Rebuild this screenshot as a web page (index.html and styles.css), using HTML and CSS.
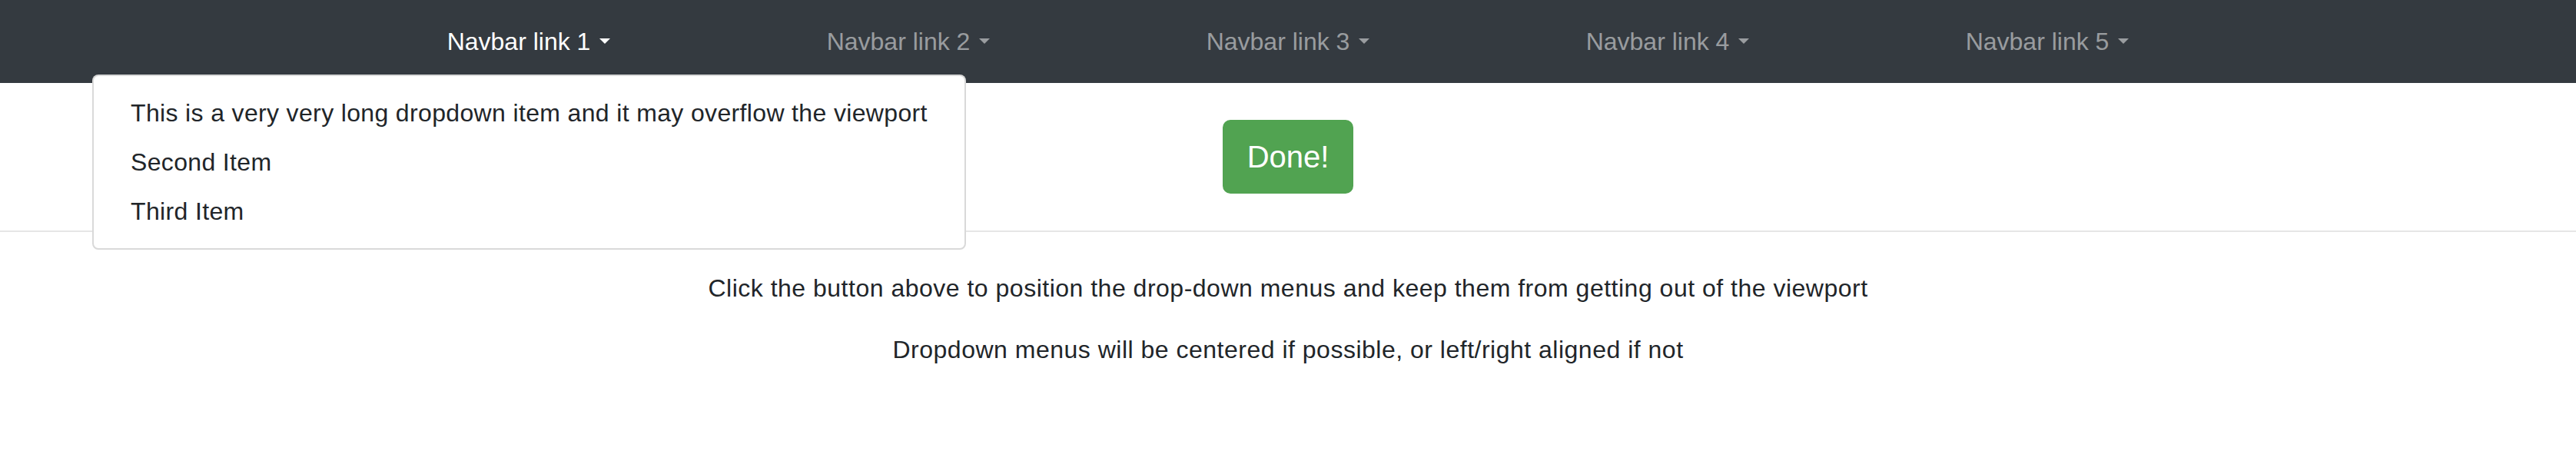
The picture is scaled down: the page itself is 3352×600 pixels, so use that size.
FILE: index.html
```html
<!doctype html>
<html lang="en">
    <head>
        <meta charset="UTF-8" />
        <meta name="viewport" content="width=device-width, initial-scale=1.0" />
        <title>Dropdown positioning</title>
        <link rel="stylesheet" href="styles.css">
    </head>
    <body>
        <nav class="navbar">
            <ul class="nav-list">
                <li class="nav-item">
                    <a class="nav-link active" href="#">Navbar link 1<span class="caret"></span></a>
                    <div class="dropdown-menu">
                        <a class="dropdown-item" href="#">This is a very very long dropdown item and it may overflow the viewport</a>
                        <a class="dropdown-item" href="#">Second Item</a>
                        <a class="dropdown-item" href="#">Third Item</a>
                    </div>
                </li>
                <li class="nav-item">
                    <a class="nav-link" href="#">Navbar link 2<span class="caret"></span></a>
                </li>
                <li class="nav-item">
                    <a class="nav-link" href="#">Navbar link 3<span class="caret"></span></a>
                </li>
                <li class="nav-item">
                    <a class="nav-link" href="#">Navbar link 4<span class="caret"></span></a>
                </li>
                <li class="nav-item">
                    <a class="nav-link" href="#">Navbar link 5<span class="caret"></span></a>
                </li>
            </ul>
        </nav>

        <div class="actions">
            <button type="button" class="btn-done">Done!</button>
        </div>

        <hr class="divider" />

        <div class="notes">
            <p>Click the button above to position the drop-down menus and keep them from getting out of the viewport</p>
            <p>Dropdown menus will be centered if possible, or left/right aligned if not</p>
        </div>
    </body>
</html>
```
FILE: styles.css
```css
body {
    margin: 0;
    font-family: "Liberation Sans", Arial, sans-serif;
    font-size: 32px;
    line-height: 48px;
    letter-spacing: 0.5px;
    color: #212529;
    background-color: #fff;
}
.navbar {
    position: relative;
    background-color: #343a40;
    padding: 14px 0;
}
.nav-list {
    display: flex;
    justify-content: center;
    list-style: none;
    margin: 0;
    padding: 0;
}
.nav-item {
    width: 494px;
    text-align: center;
}
.nav-link {
    display: inline-block;
    padding: 16px;
    color: rgba(255, 255, 255, 0.5);
    text-decoration: none;
    letter-spacing: 0;
}
.nav-link.active {
    color: #fff;
}
.caret {
    display: inline-block;
    margin-left: 12px;
    vertical-align: 8px;
    border-top: 7px solid;
    border-left: 7px solid transparent;
    border-right: 7px solid transparent;
}
.dropdown-menu {
    position: absolute;
    top: 97px;
    left: 120px;
    z-index: 10;
    padding: 16px 0;
    text-align: left;
    background-color: #fff;
    border: 2px solid rgba(0, 0, 0, 0.15);
    border-radius: 8px;
}
.dropdown-item {
    display: block;
    padding: 8px 48px;
    color: #212529;
    text-decoration: none;
    white-space: nowrap;
    letter-spacing: 0.35px;
}
.actions {
    padding: 48px 0;
    text-align: center;
}
.btn-done {
    font-family: inherit;
    font-size: 40px;
    line-height: 60px;
    letter-spacing: 0;
    padding: 16px 30px;
    color: #fff;
    background-color: #51a351;
    border: 2px solid #51a351;
    border-radius: 10px;
    cursor: pointer;
}
.divider {
    margin: 0;
    border: 0;
    border-top: 2px solid #e6e6e6;
}
.notes {
    padding-top: 49px;
    text-align: center;
}
.notes p {
    margin: 0 0 32px;
}
```
